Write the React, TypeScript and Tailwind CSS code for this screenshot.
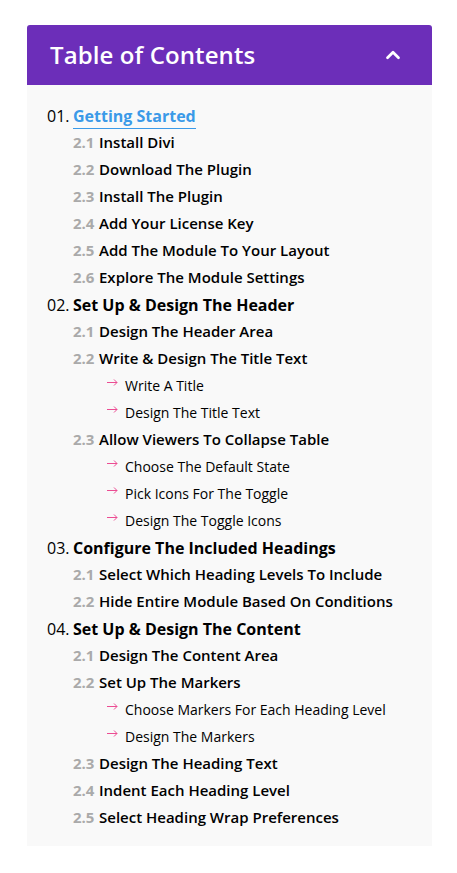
import { ChevronUp } from 'lucide-react'

type Sub = { num: string; title: string; items?: string[] }
type Section = { num: string; title: string; active?: boolean; subs: Sub[] }

const sections: Section[] = [
  {
    num: '01.',
    title: 'Getting Started',
    active: true,
    subs: [
      { num: '2.1', title: 'Install Divi' },
      { num: '2.2', title: 'Download The Plugin' },
      { num: '2.3', title: 'Install The Plugin' },
      { num: '2.4', title: 'Add Your License Key' },
      { num: '2.5', title: 'Add The Module To Your Layout' },
      { num: '2.6', title: 'Explore The Module Settings' },
    ],
  },
  {
    num: '02.',
    title: 'Set Up & Design The Header',
    subs: [
      { num: '2.1', title: 'Design The Header Area' },
      { num: '2.2', title: 'Write & Design The Title Text', items: ['Write A Title', 'Design The Title Text'] },
      {
        num: '2.3',
        title: 'Allow Viewers To Collapse Table',
        items: ['Choose The Default State', 'Pick Icons For The Toggle', 'Design The Toggle Icons'],
      },
    ],
  },
  {
    num: '03.',
    title: 'Configure The Included Headings',
    subs: [
      { num: '2.1', title: 'Select Which Heading Levels To Include' },
      { num: '2.2', title: 'Hide Entire Module Based On Conditions' },
    ],
  },
  {
    num: '04.',
    title: 'Set Up & Design The Content',
    subs: [
      { num: '2.1', title: 'Design The Content Area' },
      { num: '2.2', title: 'Set Up The Markers', items: ['Choose Markers For Each Heading Level', 'Design The Markers'] },
      { num: '2.3', title: 'Design The Heading Text' },
      { num: '2.4', title: 'Indent Each Heading Level' },
      { num: '2.5', title: 'Select Heading Wrap Preferences' },
    ],
  },
]

function Arrow() {
  return (
    <svg width="11" height="7" viewBox="0 0 11 7" fill="none" className="shrink-0 -mt-[6px]">
      <path d="M0 3.5H10M7 0.5L10 3.5L7 6.5" stroke="#ec4d93" strokeWidth="1" />
    </svg>
  )
}

export default function App() {
  return (
    <div className="min-h-screen bg-white pt-[25px] pl-[27px] font-['Open_Sans',sans-serif]">
      <div className="w-[405px] bg-[#f9f9f9] rounded-t-[3px]">
        {/* Header */}
        <div className="h-[60px] bg-[#6c2eb9] rounded-t-[3px] flex items-center justify-between pl-[23px] pr-[28px]">
          <h1 className="text-[24px] font-semibold text-white tracking-[0.1px]">Table of Contents</h1>
          <ChevronUp className="w-[22px] h-[22px] text-white" strokeWidth={3} />
        </div>

        {/* List */}
        <div className="pl-[20px] pt-[17px] pb-[15px]">
          {sections.map((s) => (
            <div key={s.num}>
              <div className="h-[27px] flex items-center text-[16px] text-black">
                <span className="w-[26px] shrink-0">{s.num}</span>
                {s.active ? (
                  <span className="font-bold text-[#3b9ae8] border-b-[1.5px] border-[#3b9ae8] leading-[23px] mt-[2px]">
                    {s.title}
                  </span>
                ) : (
                  <span className="font-bold">{s.title}</span>
                )}
              </div>
              {s.subs.map((sub) => (
                <div key={sub.num + sub.title}>
                  <div className="h-[27px] flex items-center pl-[26px] text-[15px]">
                    <span className="w-[26px] shrink-0 font-bold text-[#aaaaaa]">{sub.num}</span>
                    <span className="font-[560] text-black">{sub.title}</span>
                  </div>
                  {sub.items?.map((item) => (
                    <div key={item} className="h-[27px] flex items-center pl-[60px] text-[14px]">
                      <span className="w-[18px] shrink-0 flex">
                        <Arrow />
                      </span>
                      <span className="font-normal text-black">{item}</span>
                    </div>
                  ))}
                </div>
              ))}
            </div>
          ))}
        </div>
      </div>
    </div>
  )
}
